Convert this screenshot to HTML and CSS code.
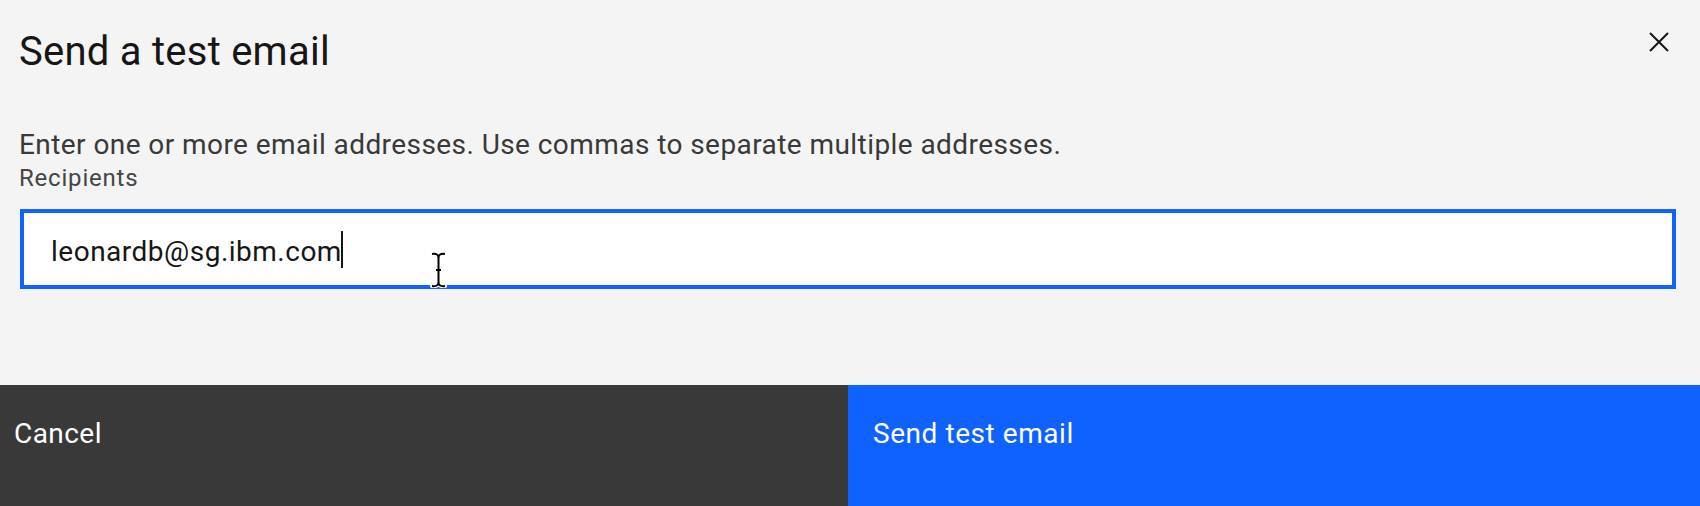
FILE: index.html
```html
<!DOCTYPE html>
<html lang="en">
<head>
<meta charset="utf-8">
<title>Send a test email</title>
<link rel="stylesheet" href="styles.css">
</head>
<body>
<div class="modal">
  <div class="modal-main">
    <header class="modal-header">
      <h2 class="modal-title">Send a test email</h2>
      <button class="modal-close" aria-label="Close">
        <svg width="20" height="20" viewBox="0 0 20 20"><path d="M1 1 L19 19 M19 1 L1 19" stroke="#161616" stroke-width="2" fill="none"/></svg>
      </button>
    </header>
    <div class="modal-content">
      <p class="modal-desc">Enter one or more email addresses. Use commas to separate multiple addresses.</p>
      <label class="field-label">Recipients</label>
      <div class="field-wrap">
        <div class="text-input"><span class="input-value">leonardb@sg.ibm.com</span><span class="caret"></span></div>
        <svg class="ibeam" width="17" height="36" viewBox="0 0 17 36">
          <path d="M2 2 Q8.5 1 8.5 6 Q8.5 1 15 2 M8.5 6 V30 Q8.5 35 2 34 M8.5 30 Q8.5 35 15 34 M6 18 H11" stroke="#fff" stroke-width="4" fill="none" stroke-linecap="round"/>
          <path d="M2 2 Q8.5 1 8.5 6 Q8.5 1 15 2 M8.5 6 V30 Q8.5 35 2 34 M8.5 30 Q8.5 35 15 34 M6 18 H11" stroke="#000" stroke-width="2" fill="none"/>
        </svg>
      </div>
    </div>
  </div>
  <footer class="modal-footer">
    <button class="btn btn-secondary">Cancel</button>
    <button class="btn btn-primary">Send test email</button>
  </footer>
</div>
</body>
</html>
```

FILE: styles.css
```css
* { box-sizing: border-box; }
html, body { margin: 0; padding: 0; }
body {
  background: #f4f4f4;
  font-family: Roboto, "Liberation Sans", sans-serif;
  color: #161616;
  width: 1700px;
  height: 506px;
  overflow: hidden;
}
.modal {
  display: flex;
  flex-direction: column;
  height: 506px;
}
.modal-main {
  flex: 1;
  display: flex;
  flex-direction: column;
}
.modal-header {
  display: flex;
  justify-content: space-between;
  align-items: flex-start;
  padding: 28px 30px 0 19px;
}
.modal-title {
  margin: 0;
  font-size: 40px;
  line-height: 48px;
  font-weight: 400;
  letter-spacing: 0.25px;
  color: #161616;
}
.modal-close {
  margin-top: 3px;
  width: 22px;
  height: 22px;
  padding: 1px;
  border: 0;
  background: transparent;
  display: flex;
}
.modal-content {
  padding: 51px 24px 0 19px;
  display: flex;
  flex-direction: column;
}
.modal-desc {
  margin: 0;
  font-size: 28px;
  line-height: 36px;
  letter-spacing: 0.43px;
  color: #393939;
}
.field-label {
  font-size: 24px;
  line-height: 30px;
  letter-spacing: 0.8px;
  color: #454545;
}
.field-wrap {
  position: relative;
  margin-top: 16px;
  margin-left: 1px;
}
.text-input {
  height: 80px;
  border: 4px solid #0f62fe;
  background: #ffffff;
  display: flex;
  align-items: center;
  padding-left: 27px;
  font-size: 28px;
  line-height: 36px;
  color: #161616;
}
.input-value {
  letter-spacing: 0.5px;
  margin-top: 6px;
}
.caret {
  display: inline-block;
  width: 2px;
  height: 37px;
  background: #161616;
  margin-left: -1px;
}
.ibeam {
  position: absolute;
  left: 410px;
  top: 43px;
}
.modal-footer {
  display: grid;
  grid-template-columns: 848px 1fr;
  height: 121px;
}
.btn {
  border: 0;
  margin: 0;
  font-family: inherit;
  font-size: 28px;
  line-height: 36px;
  letter-spacing: 0.45px;
  color: #ffffff;
  text-align: left;
  display: flex;
  align-items: flex-start;
  padding-top: 31px;
}
.btn-secondary {
  background: #393939;
  padding-left: 14px;
}
.btn-primary {
  background: #0f62fe;
  padding-left: 25px;
  letter-spacing: 0.55px;
}
```
